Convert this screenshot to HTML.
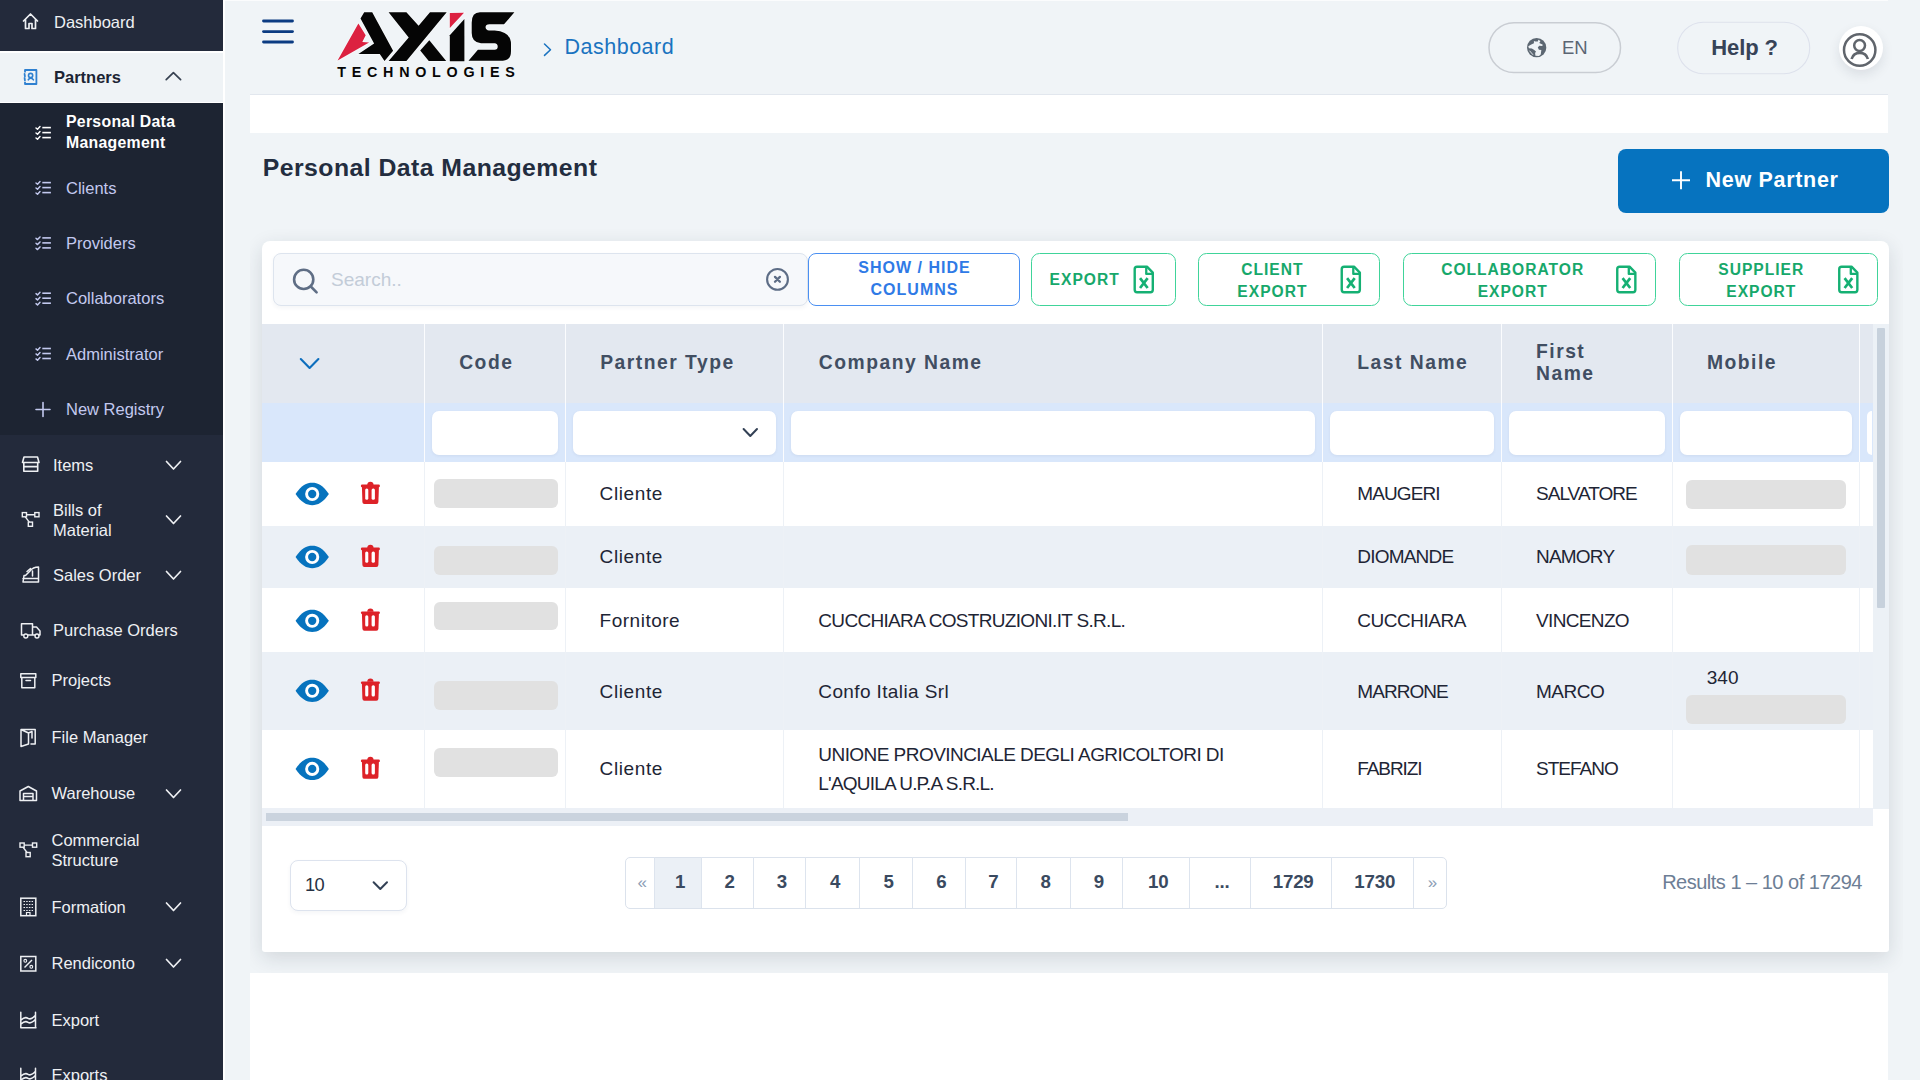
<!DOCTYPE html>
<html><head><meta charset="utf-8">
<style>
*{box-sizing:border-box;margin:0;padding:0}
html,body{width:1920px;height:1080px;overflow:hidden}
body{background:#f0f4f7;font-family:"Liberation Sans",sans-serif;position:relative;color:#1e2535}
.a{position:absolute}
svg{display:block;overflow:visible}
</style></head>
<body>
<div class="a" style="left:0px;top:0px;width:223px;height:1080px;background:#232a3b"></div>
<div class="a" style="left:0px;top:51px;width:223px;height:52px;background:#eff3f6;border-top:2px solid #fff;border-bottom:1.5px solid #fff"></div>
<div class="a" style="left:0px;top:103px;width:223px;height:331.5px;background:#1d2432"></div>
<div class="a" style="left:223px;top:0px;width:2.3000000000000114px;height:1080px;background:#ffffff"></div>
<div class="a" style="left:225px;top:0px;width:1663px;height:1px;background:#fbfcfd"></div>
<div class="a" style="left:54px;top:13.83px;font-size:16.5px;line-height:16.5px;color:#eef0f3;font-weight:normal;letter-spacing:0px;white-space:nowrap;">Dashboard</div>
<div class="a" style="left:54px;top:68.63px;font-size:16.5px;line-height:16.5px;color:#1c2434;font-weight:bold;letter-spacing:0px;white-space:nowrap;">Partners</div>
<div class="a" style="left:66px;top:114.03px;font-size:15.8px;line-height:15.8px;color:#ffffff;font-weight:bold;letter-spacing:0.3px;white-space:nowrap;">Personal Data</div>
<div class="a" style="left:66px;top:134.73px;font-size:15.8px;line-height:15.8px;color:#ffffff;font-weight:bold;letter-spacing:0.3px;white-space:nowrap;">Management</div>
<div class="a" style="left:66px;top:179.53px;font-size:16.5px;line-height:16.5px;color:#c3c9ef;font-weight:normal;letter-spacing:0px;white-space:nowrap;">Clients</div>
<div class="a" style="left:66px;top:235.03px;font-size:16.5px;line-height:16.5px;color:#c3c9ef;font-weight:normal;letter-spacing:0px;white-space:nowrap;">Providers</div>
<div class="a" style="left:66px;top:290.28px;font-size:16.5px;line-height:16.5px;color:#c3c9ef;font-weight:normal;letter-spacing:0px;white-space:nowrap;">Collaborators</div>
<div class="a" style="left:66px;top:345.53px;font-size:16.5px;line-height:16.5px;color:#c3c9ef;font-weight:normal;letter-spacing:0px;white-space:nowrap;">Administrator</div>
<div class="a" style="left:66px;top:401.03px;font-size:16.5px;line-height:16.5px;color:#c3c9ef;font-weight:normal;letter-spacing:0px;white-space:nowrap;">New Registry</div>
<div class="a" style="left:53px;top:456.53px;font-size:16.5px;line-height:16.5px;color:#eef0f3;font-weight:normal;letter-spacing:0px;white-space:nowrap;">Items</div>
<div class="a" style="left:53px;top:502.28px;font-size:16.5px;line-height:16.5px;color:#eef0f3;font-weight:normal;letter-spacing:0px;white-space:nowrap;">Bills of</div>
<div class="a" style="left:53px;top:521.78px;font-size:16.5px;line-height:16.5px;color:#eef0f3;font-weight:normal;letter-spacing:0px;white-space:nowrap;">Material</div>
<div class="a" style="left:53px;top:567.28px;font-size:16.5px;line-height:16.5px;color:#eef0f3;font-weight:normal;letter-spacing:0px;white-space:nowrap;">Sales Order</div>
<div class="a" style="left:53px;top:622.28px;font-size:16.5px;line-height:16.5px;color:#eef0f3;font-weight:normal;letter-spacing:0px;white-space:nowrap;">Purchase Orders</div>
<div class="a" style="left:51.5px;top:672.28px;font-size:16.5px;line-height:16.5px;color:#eef0f3;font-weight:normal;letter-spacing:0px;white-space:nowrap;">Projects</div>
<div class="a" style="left:51.5px;top:728.53px;font-size:16.5px;line-height:16.5px;color:#eef0f3;font-weight:normal;letter-spacing:0px;white-space:nowrap;">File Manager</div>
<div class="a" style="left:51.5px;top:785.28px;font-size:16.5px;line-height:16.5px;color:#eef0f3;font-weight:normal;letter-spacing:0px;white-space:nowrap;">Warehouse</div>
<div class="a" style="left:51.5px;top:831.78px;font-size:16.5px;line-height:16.5px;color:#eef0f3;font-weight:normal;letter-spacing:0px;white-space:nowrap;">Commercial</div>
<div class="a" style="left:51.5px;top:852.28px;font-size:16.5px;line-height:16.5px;color:#eef0f3;font-weight:normal;letter-spacing:0px;white-space:nowrap;">Structure</div>
<div class="a" style="left:51.5px;top:898.53px;font-size:16.5px;line-height:16.5px;color:#eef0f3;font-weight:normal;letter-spacing:0px;white-space:nowrap;">Formation</div>
<div class="a" style="left:51.5px;top:954.78px;font-size:16.5px;line-height:16.5px;color:#eef0f3;font-weight:normal;letter-spacing:0px;white-space:nowrap;">Rendiconto</div>
<div class="a" style="left:51.5px;top:1011.53px;font-size:16.5px;line-height:16.5px;color:#eef0f3;font-weight:normal;letter-spacing:0px;white-space:nowrap;">Export</div>
<div class="a" style="left:51.5px;top:1067.03px;font-size:16.5px;line-height:16.5px;color:#eef0f3;font-weight:normal;letter-spacing:0px;white-space:nowrap;">Exports</div>
<svg class="a" style="left:0px;top:0px" width="1920" height="1080" viewBox="0 0 1920 1080"><path d="M23.5 21 L30.5 14 L37.5 21 M25.5 19.5 V28.5 H29 V23.5 H32 V28.5 H35.5 V19.5" stroke="#eef0f3" stroke-width="1.7" fill="none" stroke-linecap="round" stroke-linejoin="round"/><path d="M25 72.4 V70 H36.4 V84 H25 V81.8" stroke="#2f80d0" stroke-width="1.8" fill="none" stroke-linejoin="round"/><path d="M24.6 74 L24.9 76.4 M24.6 77.9 L24.9 80.3" stroke="#2f80d0" stroke-width="1.8" stroke-linecap="round"/><circle cx="30.6" cy="75.5" r="2.1" stroke="#2f80d0" stroke-width="1.6" fill="none"/><path d="M28.3 79.8 Q30.6 76.4 33.4 79.8" stroke="#2f80d0" stroke-width="1.6" fill="none" stroke-linecap="round"/><path d="M166.2 79.6 L173.4 72.6 L180.6 79.6" stroke="#374151" stroke-width="1.7" fill="none" stroke-linecap="round" stroke-linejoin="round"/><path d="M166.5 461.5 L173.5 469.0 L180.5 461.5" stroke="#eef0f3" stroke-width="1.7" fill="none" stroke-linecap="round" stroke-linejoin="round"/><path d="M166.5 516 L173.5 523.5 L180.5 516" stroke="#eef0f3" stroke-width="1.7" fill="none" stroke-linecap="round" stroke-linejoin="round"/><path d="M166.5 571.5 L173.5 579.0 L180.5 571.5" stroke="#eef0f3" stroke-width="1.7" fill="none" stroke-linecap="round" stroke-linejoin="round"/><path d="M166.5 790 L173.5 797.5 L180.5 790" stroke="#eef0f3" stroke-width="1.7" fill="none" stroke-linecap="round" stroke-linejoin="round"/><path d="M166.5 903 L173.5 910.5 L180.5 903" stroke="#eef0f3" stroke-width="1.7" fill="none" stroke-linecap="round" stroke-linejoin="round"/><path d="M166.5 959.5 L173.5 967.0 L180.5 959.5" stroke="#eef0f3" stroke-width="1.7" fill="none" stroke-linecap="round" stroke-linejoin="round"/><path d="M36 128.0 L37.5 129.3 L40 126.60000000000001" stroke="#ffffff" stroke-width="1.45" fill="none" stroke-linecap="round" stroke-linejoin="round"/><path d="M42.3 127.60000000000001 H50.9" stroke="#ffffff" stroke-width="1.6" stroke-linecap="butt"/><path d="M36 133.0 L37.5 134.29999999999998 L40 131.6" stroke="#ffffff" stroke-width="1.45" fill="none" stroke-linecap="round" stroke-linejoin="round"/><path d="M42.3 132.6 H50.9" stroke="#ffffff" stroke-width="1.6" stroke-linecap="butt"/><path d="M36 138.0 L37.5 139.29999999999998 L40 136.6" stroke="#ffffff" stroke-width="1.45" fill="none" stroke-linecap="round" stroke-linejoin="round"/><path d="M42.3 137.6 H50.9" stroke="#ffffff" stroke-width="1.6" stroke-linecap="butt"/><path d="M36 183.0 L37.5 184.29999999999998 L40 181.6" stroke="#c3c9ef" stroke-width="1.45" fill="none" stroke-linecap="round" stroke-linejoin="round"/><path d="M42.3 182.6 H50.9" stroke="#c3c9ef" stroke-width="1.6" stroke-linecap="butt"/><path d="M36 188.0 L37.5 189.29999999999998 L40 186.6" stroke="#c3c9ef" stroke-width="1.45" fill="none" stroke-linecap="round" stroke-linejoin="round"/><path d="M42.3 187.6 H50.9" stroke="#c3c9ef" stroke-width="1.6" stroke-linecap="butt"/><path d="M36 193.0 L37.5 194.29999999999998 L40 191.6" stroke="#c3c9ef" stroke-width="1.45" fill="none" stroke-linecap="round" stroke-linejoin="round"/><path d="M42.3 192.6 H50.9" stroke="#c3c9ef" stroke-width="1.6" stroke-linecap="butt"/><path d="M36 238.3 L37.5 239.6 L40 236.9" stroke="#c3c9ef" stroke-width="1.45" fill="none" stroke-linecap="round" stroke-linejoin="round"/><path d="M42.3 237.9 H50.9" stroke="#c3c9ef" stroke-width="1.6" stroke-linecap="butt"/><path d="M36 243.3 L37.5 244.6 L40 241.9" stroke="#c3c9ef" stroke-width="1.45" fill="none" stroke-linecap="round" stroke-linejoin="round"/><path d="M42.3 242.9 H50.9" stroke="#c3c9ef" stroke-width="1.6" stroke-linecap="butt"/><path d="M36 248.3 L37.5 249.6 L40 246.9" stroke="#c3c9ef" stroke-width="1.45" fill="none" stroke-linecap="round" stroke-linejoin="round"/><path d="M42.3 247.9 H50.9" stroke="#c3c9ef" stroke-width="1.6" stroke-linecap="butt"/><path d="M36 293.6 L37.5 294.90000000000003 L40 292.2" stroke="#c3c9ef" stroke-width="1.45" fill="none" stroke-linecap="round" stroke-linejoin="round"/><path d="M42.3 293.2 H50.9" stroke="#c3c9ef" stroke-width="1.6" stroke-linecap="butt"/><path d="M36 298.6 L37.5 299.90000000000003 L40 297.2" stroke="#c3c9ef" stroke-width="1.45" fill="none" stroke-linecap="round" stroke-linejoin="round"/><path d="M42.3 298.2 H50.9" stroke="#c3c9ef" stroke-width="1.6" stroke-linecap="butt"/><path d="M36 303.6 L37.5 304.90000000000003 L40 302.2" stroke="#c3c9ef" stroke-width="1.45" fill="none" stroke-linecap="round" stroke-linejoin="round"/><path d="M42.3 303.2 H50.9" stroke="#c3c9ef" stroke-width="1.6" stroke-linecap="butt"/><path d="M36 348.90000000000003 L37.5 350.20000000000005 L40 347.5" stroke="#c3c9ef" stroke-width="1.45" fill="none" stroke-linecap="round" stroke-linejoin="round"/><path d="M42.3 348.5 H50.9" stroke="#c3c9ef" stroke-width="1.6" stroke-linecap="butt"/><path d="M36 353.90000000000003 L37.5 355.20000000000005 L40 352.5" stroke="#c3c9ef" stroke-width="1.45" fill="none" stroke-linecap="round" stroke-linejoin="round"/><path d="M42.3 353.5 H50.9" stroke="#c3c9ef" stroke-width="1.6" stroke-linecap="butt"/><path d="M36 358.90000000000003 L37.5 360.20000000000005 L40 357.5" stroke="#c3c9ef" stroke-width="1.45" fill="none" stroke-linecap="round" stroke-linejoin="round"/><path d="M42.3 358.5 H50.9" stroke="#c3c9ef" stroke-width="1.6" stroke-linecap="butt"/><path d="M36 409.5 H50 M43 402.5 V416.5" stroke="#c3c9ef" stroke-width="1.6" stroke-linecap="round"/><path d="M22.5 462.5 L24 457 H37.5 L39 462.5 Z M23.8 462.5 V471.2 H37.7 V462.5 M23.8 466.6 H37.7" stroke="#eef0f3" stroke-width="1.6" fill="none" stroke-linecap="round" stroke-linejoin="round"/><rect x="22.3" y="512.6" width="4.2" height="4.2" stroke="#eef0f3" stroke-width="1.4" fill="none"/><rect x="34.8" y="512.6" width="4.2" height="4.2" stroke="#eef0f3" stroke-width="1.4" fill="none"/><rect x="28.3" y="522.1" width="4.2" height="4.2" stroke="#eef0f3" stroke-width="1.4" fill="none"/><path d="M26.5 514.7 H34.8 M25.3 516.8000000000001 L29.3 522.1" stroke="#eef0f3" stroke-width="1.4" fill="none"/><rect x="20" y="843" width="4.2" height="4.2" stroke="#eef0f3" stroke-width="1.4" fill="none"/><rect x="32.5" y="843" width="4.2" height="4.2" stroke="#eef0f3" stroke-width="1.4" fill="none"/><rect x="26" y="852.5" width="4.2" height="4.2" stroke="#eef0f3" stroke-width="1.4" fill="none"/><path d="M24.2 845.1 H32.5 M23 847.2 L27 852.5" stroke="#eef0f3" stroke-width="1.4" fill="none"/><path d="M23 582 H38.5 V567 Q33 567 30 571 L25.5 575.5 L24 575.5 Z M23 578.5 H38.5 M27 571.5 L30.5 568.5 M32.5 571 V576" stroke="#eef0f3" stroke-width="1.5" fill="none" stroke-linecap="round" stroke-linejoin="round"/><path d="M21.5 635 V623.8 H32.5 V635 M32.5 627 H36.5 L40 631 V635 H38.5 M21.5 635 H23.5 M28 635 H35" stroke="#eef0f3" stroke-width="1.5" fill="none" stroke-linecap="round" stroke-linejoin="round"/><circle cx="25.8" cy="636" r="2" stroke="#eef0f3" stroke-width="1.4" fill="none"/><circle cx="37" cy="636" r="2" stroke="#eef0f3" stroke-width="1.4" fill="none"/><path d="M20.8 673.8 H35.8 V677.5 H20.8 Z M21.8 677.5 V687.8 H34.8 V677.5 M26 680.5 H30.5" stroke="#eef0f3" stroke-width="1.5" fill="none" stroke-linecap="round" stroke-linejoin="round"/><path d="M21 729.5 H35.2 V744 H31 M21 729.5 V746.5 L28.5 744 V733 L21 729.5 M28.5 733 L32 731.5 V738" stroke="#eef0f3" stroke-width="1.5" fill="none" stroke-linecap="round" stroke-linejoin="round"/><path d="M20 800.5 V791 L28.3 786.5 L36.5 791 V800.5 Z M23.5 800.5 V793.5 H33 V800.5 M23.5 796.5 H33" stroke="#eef0f3" stroke-width="1.5" fill="none" stroke-linecap="round" stroke-linejoin="round"/><rect x="20.8" y="898.2" width="15" height="17.5" stroke="#eef0f3" stroke-width="1.5" fill="none"/><path d="M23.5 901.5 H33" stroke="#eef0f3" stroke-width="1.1" stroke-dasharray="1.5 1.2"/><path d="M23.5 904.5 H33" stroke="#eef0f3" stroke-width="1.1" stroke-dasharray="1.5 1.2"/><path d="M23.5 907.5 H33" stroke="#eef0f3" stroke-width="1.1" stroke-dasharray="1.5 1.2"/><path d="M23.5 910.5 H33" stroke="#eef0f3" stroke-width="1.1" stroke-dasharray="1.5 1.2"/><path d="M26.5 915.5 V912.5 H30 V915.5" stroke="#eef0f3" stroke-width="1.2" fill="none"/><rect x="20.8" y="956.5" width="15" height="14.5" stroke="#eef0f3" stroke-width="1.5" fill="none"/><path d="M24.5 967.5 L32 960" stroke="#eef0f3" stroke-width="1.4"/><circle cx="25.3" cy="960.8" r="1.4" stroke="#eef0f3" stroke-width="1.1" fill="none"/><circle cx="31.3" cy="966.8" r="1.4" stroke="#eef0f3" stroke-width="1.1" fill="none"/><path d="M20.8 1012.3 V1027.8 H36 M20.8 1020.3 Q25 1016.3 28 1018.3 T35.5 1015.3 M20.8 1024.3 Q25 1020.3 28 1022.3 T35.5 1019.3 M35.5 1012.3 V1027.8" stroke="#eef0f3" stroke-width="1.5" fill="none" stroke-linecap="round" stroke-linejoin="round"/><path d="M20.8 1068.3 V1083.8 H36 M20.8 1076.3 Q25 1072.3 28 1074.3 T35.5 1071.3 M20.8 1080.3 Q25 1076.3 28 1078.3 T35.5 1075.3 M35.5 1068.3 V1083.8" stroke="#eef0f3" stroke-width="1.5" fill="none" stroke-linecap="round" stroke-linejoin="round"/></svg>
<svg class="a" style="left:0px;top:0px" width="1920" height="1080" viewBox="0 0 1920 1080"><path d="M263.5 21 H292.5" stroke="#0b3b82" stroke-width="2.8" stroke-linecap="round"/><path d="M263.5 31.6 H292.5" stroke="#0b3b82" stroke-width="2.8" stroke-linecap="round"/><path d="M263.5 42 H292.5" stroke="#0b3b82" stroke-width="2.8" stroke-linecap="round"/><polygon points="337.6,60.6 358.4,23.4 365.7,35.3 362.3,42.1 369.1,42.6" fill="#dc2140" stroke="#f6f9fb" stroke-width="1.7" paint-order="stroke"/><polygon points="360.5,18.4 364.2,12.2 372.2,12.2 393.1,50.7 384.5,61.1 379.8,54.1 358.4,54.1 374.1,43.4" fill="#050505" stroke="#f6f9fb" stroke-width="1.7" paint-order="stroke"/><polygon points="388.6,12.2 406.4,12.2 418.6,25.7 430,12.3 446.7,12.3 406.4,61.1 388.6,61.1 408.7,37.4" fill="#050505" stroke="#f6f9fb" stroke-width="1.7" paint-order="stroke"/><polygon points="429.3,40.3 446.2,61.1 428.75,61.1 420.2,50.4" fill="#050505" stroke="#f6f9fb" stroke-width="1.7" paint-order="stroke"/><polygon points="449.8,13 464,12.8 449.8,28" fill="#dc2140" stroke="#f6f9fb" stroke-width="1.7" paint-order="stroke"/><polygon points="449.8,35.2 464.4,19 464.4,61.2 449.8,61.2" fill="#050505" stroke="#f6f9fb" stroke-width="1.7" paint-order="stroke"/><path d="M480 12.3 H514.4 L504 24.3 H489.4 Q485.2 24.6 485.6 27.6 Q486 30.3 489 30.5 H494.6 Q511 31.5 511 44 V51 Q511 60.7 502.9 60.7 H468.5 L477.9 49.8 H494.6 Q497.7 49.6 497.7 46.7 Q497.7 43.6 494.6 43.3 H481 Q471.7 42.5 471.7 33 V22.7 Q471.7 12.3 480 12.3 Z" fill="#050505" stroke="#f6f9fb" stroke-width="1.7" paint-order="stroke"/><text x="337.3" y="76.9" font-family="Liberation Sans" font-weight="bold" font-size="14.3" fill="#050505" textLength="177.5" lengthAdjust="spacing">TECHNOLOGIES</text><path d="M544.5 44 L550.5 49.7 L544.5 55.4" stroke="#1a73c0" stroke-width="1.5" fill="none" stroke-linecap="round" stroke-linejoin="round"/><rect x="1489" y="22.8" width="131.5" height="49.8" rx="24.9" fill="none" stroke="#c9cdd3" stroke-width="1.5"/><rect x="1677.7" y="22.2" width="132" height="51.5" rx="25.7" fill="none" stroke="#dde1ec" stroke-width="1.1"/></svg>
<svg class="a" style="left:1520px;top:32px" width="36" height="32" viewBox="0 0 1215 1080"><circle cx="562" cy="528" r="326" fill="#5c6772"/><path d="M470,300 L520,320 L600,320 L620,260 L690,300 L650,370 L770,430 L750,470 L650,460 L600,520 L640,600 L720,610 L700,760 L640,810 L520,800 L510,710 L540,660 L480,610 L400,560 L300,550 L280,480 L380,420 L470,380 Z" fill="#eff3f6"/><path d="M320,630 L440,770" stroke="#eff3f6" stroke-width="30"/></svg>
<div class="a" style="left:564.5px;top:37.30px;font-size:21.5px;line-height:21.5px;color:#1a73c0;font-weight:normal;letter-spacing:0.5px;white-space:nowrap;">Dashboard</div>
<div class="a" style="left:1562px;top:39.14px;font-size:18.5px;line-height:18.5px;color:#5b6573;font-weight:normal;letter-spacing:0px;white-space:nowrap;">EN</div>
<div class="a" style="left:1711.3px;top:37.08px;font-size:22px;line-height:22px;color:#374357;font-weight:bold;letter-spacing:-0.1px;white-space:nowrap;">Help ?</div>
<div class="a" style="left:1839px;top:25.6px;width:44.4px;height:44.4px;border-radius:50%;background:#fff;box-shadow:0 5px 12px rgba(30,40,60,0.10)"></div>
<svg class="a" style="left:0px;top:0px" width="1920" height="1080" viewBox="0 0 1920 1080"><circle cx="1859.7" cy="50" r="15.7" stroke="#60656c" stroke-width="2.5" fill="none"/><circle cx="1859.6" cy="45.5" r="5.4" stroke="#60656c" stroke-width="2.5" fill="none"/><path d="M1851.6 59 A8.5 8.5 0 0 1 1867.9 59" stroke="#60656c" stroke-width="2.6" fill="none"/></svg>
<div class="a" style="left:250px;top:94px;width:1638px;height:39px;background:#fff;border-top:1px solid #e2e7ee"></div>
<div class="a" style="left:262.75px;top:155.61px;font-size:24.8px;line-height:24.8px;color:#232d3f;font-weight:bold;letter-spacing:0.45px;white-space:nowrap;">Personal Data Management</div>
<div class="a" style="left:1618px;top:149px;width:271px;height:64px;background:#0673bf;border-radius:8px"></div>
<svg class="a" style="left:0px;top:0px" width="1920" height="1080" viewBox="0 0 1920 1080"><path d="M1672 180.2 H1690 M1681 171.2 V189.2" stroke="#fff" stroke-width="1.9"/></svg>
<div class="a" style="left:1705.5px;top:170.20px;font-size:21.5px;line-height:21.5px;color:#ffffff;font-weight:bold;letter-spacing:0.7px;white-space:nowrap;">New Partner</div>
<div class="a" style="left:250px;top:133px;width:1653px;height:840px;overflow:hidden"><div class="a" style="left:12px;top:108px;width:1627px;height:711px;background:#fff;border-radius:8px 8px 3px 3px;box-shadow:0 6px 20px rgba(30,40,60,0.14)"></div></div>
<div class="a" style="left:250px;top:973px;width:1638px;height:107px;background:#fff"></div>
<div class="a" style="left:273px;top:253px;width:534.5px;height:53px;background:#f6f8fb;border:1px solid #dde4ee;border-radius:8px;box-shadow:0 2px 4px rgba(40,60,90,0.05)"></div>
<svg class="a" style="left:0px;top:0px" width="1920" height="1080" viewBox="0 0 1920 1080"><circle cx="303.7" cy="279.4" r="9.6" stroke="#5f6e85" stroke-width="2.6" fill="none"/><path d="M310.8 286.5 L316.6 292.3" stroke="#5f6e85" stroke-width="2.6" stroke-linecap="round"/><circle cx="777.5" cy="279.4" r="10.4" stroke="#5d6d86" stroke-width="2.1" fill="none"/><path d="M775 276.9 L779.9 281.8 M779.9 276.9 L775 281.8" stroke="#5d6d86" stroke-width="2.3" stroke-linecap="round"/></svg>
<div class="a" style="left:331px;top:269.62px;font-size:19px;line-height:19px;color:#c3ccd8;font-weight:normal;letter-spacing:0px;white-space:nowrap;">Search..</div>
<div class="a" style="left:808.3px;top:253.2px;width:211.5px;height:52.5px;border:1.6px solid #4b90f2;border-radius:8px;background:#fff"></div>
<div class="a" style="left:614px;width:600px;text-align:center;top:260.36px;font-size:16px;line-height:16px;color:#2f7ae6;font-weight:bold;letter-spacing:1.0px;text-indent:1.0px;white-space:nowrap;">SHOW / HIDE</div>
<div class="a" style="left:614px;width:600px;text-align:center;top:282.26px;font-size:16px;line-height:16px;color:#2f7ae6;font-weight:bold;letter-spacing:1.0px;text-indent:1.0px;white-space:nowrap;">COLUMNS</div>
<div class="a" style="left:1031.3px;top:253.2px;width:144.5px;height:52.5px;border:1.6px solid #40d49a;border-radius:8.5px;background:#fff"></div>
<div class="a" style="left:1198.4px;top:253.2px;width:181.89999999999986px;height:52.5px;border:1.6px solid #40d49a;border-radius:8.5px;background:#fff"></div>
<div class="a" style="left:1403.3px;top:253.2px;width:252.4000000000001px;height:52.5px;border:1.6px solid #40d49a;border-radius:8.5px;background:#fff"></div>
<div class="a" style="left:1678.7px;top:253.2px;width:199.39999999999986px;height:52.5px;border:1.6px solid #40d49a;border-radius:8.5px;background:#fff"></div>
<svg class="a" style="left:0px;top:0px" width="1920" height="1080" viewBox="0 0 1920 1080"><path d="M1137.05 266.7 H1146.95 L1152.8 272.6 V289.8 Q1152.8 292.2 1150.45 292.2 H1137.05 Q1134.7 292.2 1134.7 289.8 V269.1 Q1134.7 266.7 1137.05 266.7 Z" stroke="#15b073" stroke-width="2.4" fill="none" stroke-linejoin="round"/><path d="M1146.25 266.8 V273.90000000000003 H1152.65" stroke="#15b073" stroke-width="2.3" fill="none" stroke-linejoin="round"/><path d="M1140.05 278.2 L1147.65 288.0 M1147.65 278.2 L1140.05 288.0" stroke="#15b073" stroke-width="2.7" fill="none"/><path d="M1344.1 266.7 H1354.0 L1359.85 272.6 V289.8 Q1359.85 292.2 1357.5 292.2 H1344.1 Q1341.75 292.2 1341.75 289.8 V269.1 Q1341.75 266.7 1344.1 266.7 Z" stroke="#15b073" stroke-width="2.4" fill="none" stroke-linejoin="round"/><path d="M1353.3 266.8 V273.90000000000003 H1359.7" stroke="#15b073" stroke-width="2.3" fill="none" stroke-linejoin="round"/><path d="M1347.1 278.2 L1354.7 288.0 M1354.7 278.2 L1347.1 288.0" stroke="#15b073" stroke-width="2.7" fill="none"/><path d="M1619.6 266.7 H1629.5 L1635.35 272.6 V289.8 Q1635.35 292.2 1633.0 292.2 H1619.6 Q1617.25 292.2 1617.25 289.8 V269.1 Q1617.25 266.7 1619.6 266.7 Z" stroke="#15b073" stroke-width="2.4" fill="none" stroke-linejoin="round"/><path d="M1628.8 266.8 V273.90000000000003 H1635.2" stroke="#15b073" stroke-width="2.3" fill="none" stroke-linejoin="round"/><path d="M1622.6 278.2 L1630.2 288.0 M1630.2 278.2 L1622.6 288.0" stroke="#15b073" stroke-width="2.7" fill="none"/><path d="M1841.6 266.7 H1851.5 L1857.35 272.6 V289.8 Q1857.35 292.2 1855.0 292.2 H1841.6 Q1839.25 292.2 1839.25 289.8 V269.1 Q1839.25 266.7 1841.6 266.7 Z" stroke="#15b073" stroke-width="2.4" fill="none" stroke-linejoin="round"/><path d="M1850.8 266.8 V273.90000000000003 H1857.2" stroke="#15b073" stroke-width="2.3" fill="none" stroke-linejoin="round"/><path d="M1844.6 278.2 L1852.2 288.0 M1852.2 278.2 L1844.6 288.0" stroke="#15b073" stroke-width="2.7" fill="none"/></svg>
<div class="a" style="left:1049.6px;top:271.79px;font-size:15.6px;line-height:15.6px;color:#17a86b;font-weight:bold;letter-spacing:1.0px;white-space:nowrap;">EXPORT</div>
<div class="a" style="left:971.9000000000001px;width:600px;text-align:center;top:261.59px;font-size:15.6px;line-height:15.6px;color:#17a86b;font-weight:bold;letter-spacing:1.0px;text-indent:1.0px;white-space:nowrap;">CLIENT</div>
<div class="a" style="left:971.9000000000001px;width:600px;text-align:center;top:283.69px;font-size:15.6px;line-height:15.6px;color:#17a86b;font-weight:bold;letter-spacing:1.0px;text-indent:1.0px;white-space:nowrap;">EXPORT</div>
<div class="a" style="left:1212.2px;width:600px;text-align:center;top:261.59px;font-size:15.6px;line-height:15.6px;color:#17a86b;font-weight:bold;letter-spacing:1.0px;text-indent:1.0px;white-space:nowrap;">COLLABORATOR</div>
<div class="a" style="left:1212.2px;width:600px;text-align:center;top:283.69px;font-size:15.6px;line-height:15.6px;color:#17a86b;font-weight:bold;letter-spacing:1.0px;text-indent:1.0px;white-space:nowrap;">EXPORT</div>
<div class="a" style="left:1460.8px;width:600px;text-align:center;top:261.59px;font-size:15.6px;line-height:15.6px;color:#17a86b;font-weight:bold;letter-spacing:1.0px;text-indent:1.0px;white-space:nowrap;">SUPPLIER</div>
<div class="a" style="left:1460.8px;width:600px;text-align:center;top:283.69px;font-size:15.6px;line-height:15.6px;color:#17a86b;font-weight:bold;letter-spacing:1.0px;text-indent:1.0px;white-space:nowrap;">EXPORT</div>
<div class="a" style="left:262px;top:324px;width:1610.5px;height:79.30000000000001px;background:#e3e8f0"></div>
<div class="a" style="left:262px;top:403.3px;width:1610.5px;height:58.69999999999999px;background:#d9e7fb"></div>
<div class="a" style="left:262px;top:462px;width:1610.5px;height:64px;background:#fff"></div>
<div class="a" style="left:262px;top:526px;width:1610.5px;height:62.39999999999998px;background:#ebf0f6"></div>
<div class="a" style="left:262px;top:588.4px;width:1610.5px;height:63.60000000000002px;background:#fff"></div>
<div class="a" style="left:262px;top:652px;width:1610.5px;height:78px;background:#ebf0f6"></div>
<div class="a" style="left:262px;top:730px;width:1610.5px;height:78.39999999999998px;background:#fff"></div>
<div class="a" style="left:423.9px;top:324px;width:1.0px;height:138px;background:#fbfcfe"></div>
<div class="a" style="left:423.9px;top:462px;width:1.0px;height:346.4px;background:#edf1f6"></div>
<div class="a" style="left:565.0px;top:324px;width:1.0px;height:138px;background:#fbfcfe"></div>
<div class="a" style="left:565.0px;top:462px;width:1.0px;height:346.4px;background:#edf1f6"></div>
<div class="a" style="left:782.9px;top:324px;width:1.0px;height:138px;background:#fbfcfe"></div>
<div class="a" style="left:782.9px;top:462px;width:1.0px;height:346.4px;background:#edf1f6"></div>
<div class="a" style="left:1322.0px;top:324px;width:1.0px;height:138px;background:#fbfcfe"></div>
<div class="a" style="left:1322.0px;top:462px;width:1.0px;height:346.4px;background:#edf1f6"></div>
<div class="a" style="left:1501.0px;top:324px;width:1.0px;height:138px;background:#fbfcfe"></div>
<div class="a" style="left:1501.0px;top:462px;width:1.0px;height:346.4px;background:#edf1f6"></div>
<div class="a" style="left:1671.8px;top:324px;width:1.0px;height:138px;background:#fbfcfe"></div>
<div class="a" style="left:1671.8px;top:462px;width:1.0px;height:346.4px;background:#edf1f6"></div>
<div class="a" style="left:1858.7px;top:324px;width:1.0px;height:138px;background:#fbfcfe"></div>
<div class="a" style="left:1858.7px;top:462px;width:1.0px;height:346.4px;background:#edf1f6"></div>
<div class="a" style="left:432px;top:410.5px;width:125.60000000000002px;height:44.5px;background:#fff;border-radius:7px;box-shadow:0 1px 3px rgba(60,80,120,0.08)"></div>
<div class="a" style="left:572.5px;top:410.5px;width:203.89999999999998px;height:44.5px;background:#fff;border-radius:7px;box-shadow:0 1px 3px rgba(60,80,120,0.08)"></div>
<div class="a" style="left:791px;top:410.5px;width:524px;height:44.5px;background:#fff;border-radius:7px;box-shadow:0 1px 3px rgba(60,80,120,0.08)"></div>
<div class="a" style="left:1330.2px;top:410.5px;width:163.5999999999999px;height:44.5px;background:#fff;border-radius:7px;box-shadow:0 1px 3px rgba(60,80,120,0.08)"></div>
<div class="a" style="left:1509px;top:410.5px;width:156px;height:44.5px;background:#fff;border-radius:7px;box-shadow:0 1px 3px rgba(60,80,120,0.08)"></div>
<div class="a" style="left:1680px;top:410.5px;width:171.79999999999995px;height:44.5px;background:#fff;border-radius:7px;box-shadow:0 1px 3px rgba(60,80,120,0.08)"></div>
<div class="a" style="left:1866.8px;top:410.5px;width:5.7000000000000455px;height:44.5px;background:#fff;border-radius:7px 0 0 7px"></div>
<div class="a" style="left:1872.5px;top:324px;width:16.5px;height:485px;background:#ecf1f6"></div>
<div class="a" style="left:1877px;top:328px;width:8.200000000000045px;height:280px;background:#c7d1dc;border-radius:1px"></div>
<svg class="a" style="left:0px;top:0px" width="1920" height="1080" viewBox="0 0 1920 1080"><path d="M300.8 359 L309.6 368 L318.4 359" stroke="#0d6ebd" stroke-width="2.1" fill="none" stroke-linecap="round" stroke-linejoin="round"/><path d="M743.6 429 L750.3 436 L757 429" stroke="#334155" stroke-width="2" fill="none" stroke-linecap="round" stroke-linejoin="round"/></svg>
<div class="a" style="left:459.2px;top:353.26px;font-size:19.3px;line-height:19.3px;color:#414e62;font-weight:bold;letter-spacing:1.5px;white-space:nowrap;">Code</div>
<div class="a" style="left:600.2px;top:353.26px;font-size:19.3px;line-height:19.3px;color:#414e62;font-weight:bold;letter-spacing:1.5px;white-space:nowrap;">Partner Type</div>
<div class="a" style="left:818.8px;top:353.46px;font-size:19.3px;line-height:19.3px;color:#414e62;font-weight:bold;letter-spacing:1.5px;white-space:nowrap;">Company Name</div>
<div class="a" style="left:1357.3px;top:353.26px;font-size:19.3px;line-height:19.3px;color:#414e62;font-weight:bold;letter-spacing:1.5px;white-space:nowrap;">Last Name</div>
<div class="a" style="left:1536px;top:341.66px;font-size:19.3px;line-height:19.3px;color:#414e62;font-weight:bold;letter-spacing:1.5px;white-space:nowrap;">First</div>
<div class="a" style="left:1536px;top:364.26px;font-size:19.3px;line-height:19.3px;color:#414e62;font-weight:bold;letter-spacing:1.5px;white-space:nowrap;">Name</div>
<div class="a" style="left:1707px;top:353.16px;font-size:19.3px;line-height:19.3px;color:#414e62;font-weight:bold;letter-spacing:1.5px;white-space:nowrap;">Mobile</div>
<svg class="a" style="left:0px;top:0px" width="1920" height="1080" viewBox="0 0 1920 1080"><path d="M295.55 494 C301.55 485.35 306.55 482.85 312.2 482.85 C317.84999999999997 482.85 322.84999999999997 485.35 328.84999999999997 494 C322.84999999999997 502.65 317.84999999999997 505.15 312.2 505.15 C306.55 505.15 301.55 502.65 295.55 494 Z" fill="#0673be"/><circle cx="312.2" cy="494" r="7.05" fill="#fff"/><circle cx="312.2" cy="494" r="4.15" fill="#0673be"/><path d="M367.2 485.0 Q367.4 481.8 370.4 481.8 Q373.4 481.8 373.59999999999997 485.0 Z" fill="#dd2228"/><rect x="360.9" y="484.6" width="19" height="2.6" rx="1.2" fill="#dd2228"/><path d="M361.9 486.8 H378.9 L378.4 502.0 Q378.29999999999995 503.90000000000003 376.4 503.90000000000003 H364.4 Q362.5 503.90000000000003 362.4 502.0 Z" fill="#dd2228"/><rect x="365.2" y="488.5" width="3.1" height="11.2" rx="1.5" fill="#fff"/><rect x="371.59999999999997" y="488.5" width="3.3" height="11.2" rx="1.5" fill="#fff"/><path d="M295.55 557 C301.55 548.35 306.55 545.85 312.2 545.85 C317.84999999999997 545.85 322.84999999999997 548.35 328.84999999999997 557 C322.84999999999997 565.65 317.84999999999997 568.15 312.2 568.15 C306.55 568.15 301.55 565.65 295.55 557 Z" fill="#0673be"/><circle cx="312.2" cy="557" r="7.05" fill="#fff"/><circle cx="312.2" cy="557" r="4.15" fill="#0673be"/><path d="M367.2 548.0000000000001 Q367.4 544.8000000000001 370.4 544.8000000000001 Q373.4 544.8000000000001 373.59999999999997 548.0000000000001 Z" fill="#dd2228"/><rect x="360.9" y="547.6" width="19" height="2.6" rx="1.2" fill="#dd2228"/><path d="M361.9 549.8000000000001 H378.9 L378.4 565.0000000000001 Q378.29999999999995 566.9000000000001 376.4 566.9000000000001 H364.4 Q362.5 566.9000000000001 362.4 565.0000000000001 Z" fill="#dd2228"/><rect x="365.2" y="551.5000000000001" width="3.1" height="11.2" rx="1.5" fill="#fff"/><rect x="371.59999999999997" y="551.5000000000001" width="3.3" height="11.2" rx="1.5" fill="#fff"/><path d="M295.55 620.8 C301.55 612.15 306.55 609.65 312.2 609.65 C317.84999999999997 609.65 322.84999999999997 612.15 328.84999999999997 620.8 C322.84999999999997 629.4499999999999 317.84999999999997 631.9499999999999 312.2 631.9499999999999 C306.55 631.9499999999999 301.55 629.4499999999999 295.55 620.8 Z" fill="#0673be"/><circle cx="312.2" cy="620.8" r="7.05" fill="#fff"/><circle cx="312.2" cy="620.8" r="4.15" fill="#0673be"/><path d="M367.2 611.8000000000001 Q367.4 608.6 370.4 608.6 Q373.4 608.6 373.59999999999997 611.8000000000001 Z" fill="#dd2228"/><rect x="360.9" y="611.4" width="19" height="2.6" rx="1.2" fill="#dd2228"/><path d="M361.9 613.6 H378.9 L378.4 628.8000000000001 Q378.29999999999995 630.7 376.4 630.7 H364.4 Q362.5 630.7 362.4 628.8000000000001 Z" fill="#dd2228"/><rect x="365.2" y="615.3000000000001" width="3.1" height="11.2" rx="1.5" fill="#fff"/><rect x="371.59999999999997" y="615.3000000000001" width="3.3" height="11.2" rx="1.5" fill="#fff"/><path d="M295.55 690.8 C301.55 682.15 306.55 679.65 312.2 679.65 C317.84999999999997 679.65 322.84999999999997 682.15 328.84999999999997 690.8 C322.84999999999997 699.4499999999999 317.84999999999997 701.9499999999999 312.2 701.9499999999999 C306.55 701.9499999999999 301.55 699.4499999999999 295.55 690.8 Z" fill="#0673be"/><circle cx="312.2" cy="690.8" r="7.05" fill="#fff"/><circle cx="312.2" cy="690.8" r="4.15" fill="#0673be"/><path d="M367.2 681.8000000000001 Q367.4 678.6 370.4 678.6 Q373.4 678.6 373.59999999999997 681.8000000000001 Z" fill="#dd2228"/><rect x="360.9" y="681.4" width="19" height="2.6" rx="1.2" fill="#dd2228"/><path d="M361.9 683.6 H378.9 L378.4 698.8000000000001 Q378.29999999999995 700.7 376.4 700.7 H364.4 Q362.5 700.7 362.4 698.8000000000001 Z" fill="#dd2228"/><rect x="365.2" y="685.3000000000001" width="3.1" height="11.2" rx="1.5" fill="#fff"/><rect x="371.59999999999997" y="685.3000000000001" width="3.3" height="11.2" rx="1.5" fill="#fff"/><path d="M295.55 768.9 C301.55 760.25 306.55 757.75 312.2 757.75 C317.84999999999997 757.75 322.84999999999997 760.25 328.84999999999997 768.9 C322.84999999999997 777.55 317.84999999999997 780.05 312.2 780.05 C306.55 780.05 301.55 777.55 295.55 768.9 Z" fill="#0673be"/><circle cx="312.2" cy="768.9" r="7.05" fill="#fff"/><circle cx="312.2" cy="768.9" r="4.15" fill="#0673be"/><path d="M367.2 759.9000000000001 Q367.4 756.7 370.4 756.7 Q373.4 756.7 373.59999999999997 759.9000000000001 Z" fill="#dd2228"/><rect x="360.9" y="759.5" width="19" height="2.6" rx="1.2" fill="#dd2228"/><path d="M361.9 761.7 H378.9 L378.4 776.9000000000001 Q378.29999999999995 778.8000000000001 376.4 778.8000000000001 H364.4 Q362.5 778.8000000000001 362.4 776.9000000000001 Z" fill="#dd2228"/><rect x="365.2" y="763.4000000000001" width="3.1" height="11.2" rx="1.5" fill="#fff"/><rect x="371.59999999999997" y="763.4000000000001" width="3.3" height="11.2" rx="1.5" fill="#fff"/></svg>
<div class="a" style="left:434.3px;top:479.2px;width:123.40000000000003px;height:28.600000000000023px;background:#e1e1e1;border-radius:6px"></div>
<div class="a" style="left:434.3px;top:546.2px;width:123.40000000000003px;height:28.600000000000023px;background:#e1e1e1;border-radius:6px"></div>
<div class="a" style="left:434.3px;top:601.9px;width:123.40000000000003px;height:28.600000000000023px;background:#e1e1e1;border-radius:6px"></div>
<div class="a" style="left:434.3px;top:681.2px;width:123.40000000000003px;height:28.600000000000023px;background:#e1e1e1;border-radius:6px"></div>
<div class="a" style="left:434.3px;top:748.2px;width:123.40000000000003px;height:28.600000000000023px;background:#e1e1e1;border-radius:6px"></div>
<div class="a" style="left:1686px;top:479.8px;width:159.70000000000005px;height:29.600000000000023px;background:#e1e1e1;border-radius:6px"></div>
<div class="a" style="left:1686px;top:545.2px;width:159.70000000000005px;height:29.600000000000023px;background:#e1e1e1;border-radius:6px"></div>
<div class="a" style="left:1686px;top:694.8px;width:159.70000000000005px;height:29.600000000000023px;background:#e1e1e1;border-radius:6px"></div>
<div class="a" style="left:599.6px;top:484.32px;font-size:19px;line-height:19px;color:#1e2535;font-weight:normal;letter-spacing:0.6px;white-space:nowrap;">Cliente</div>
<div class="a" style="left:1357.3px;top:484.32px;font-size:19px;line-height:19px;color:#1e2535;font-weight:normal;letter-spacing:-0.89px;white-space:nowrap;">MAUGERI</div>
<div class="a" style="left:1536px;top:484.32px;font-size:19px;line-height:19px;color:#1e2535;font-weight:normal;letter-spacing:-0.97px;white-space:nowrap;">SALVATORE</div>
<div class="a" style="left:599.6px;top:547.42px;font-size:19px;line-height:19px;color:#1e2535;font-weight:normal;letter-spacing:0.6px;white-space:nowrap;">Cliente</div>
<div class="a" style="left:1357.3px;top:547.42px;font-size:19px;line-height:19px;color:#1e2535;font-weight:normal;letter-spacing:-0.8px;white-space:nowrap;">DIOMANDE</div>
<div class="a" style="left:1536px;top:547.42px;font-size:19px;line-height:19px;color:#1e2535;font-weight:normal;letter-spacing:-0.8px;white-space:nowrap;">NAMORY</div>
<div class="a" style="left:599.6px;top:611.42px;font-size:19px;line-height:19px;color:#1e2535;font-weight:normal;letter-spacing:0.5px;white-space:nowrap;">Fornitore</div>
<div class="a" style="left:818.3px;top:611.42px;font-size:19px;line-height:19px;color:#1e2535;font-weight:normal;letter-spacing:-0.68px;white-space:nowrap;">CUCCHIARA COSTRUZIONI.IT S.R.L.</div>
<div class="a" style="left:1357.3px;top:611.42px;font-size:19px;line-height:19px;color:#1e2535;font-weight:normal;letter-spacing:-0.47px;white-space:nowrap;">CUCCHIARA</div>
<div class="a" style="left:1536px;top:611.42px;font-size:19px;line-height:19px;color:#1e2535;font-weight:normal;letter-spacing:-0.65px;white-space:nowrap;">VINCENZO</div>
<div class="a" style="left:599.6px;top:681.92px;font-size:19px;line-height:19px;color:#1e2535;font-weight:normal;letter-spacing:0.6px;white-space:nowrap;">Cliente</div>
<div class="a" style="left:818.3px;top:681.92px;font-size:19px;line-height:19px;color:#1e2535;font-weight:normal;letter-spacing:0.38px;white-space:nowrap;">Confo Italia Srl</div>
<div class="a" style="left:1357.3px;top:681.92px;font-size:19px;line-height:19px;color:#1e2535;font-weight:normal;letter-spacing:-0.96px;white-space:nowrap;">MARRONE</div>
<div class="a" style="left:1536px;top:681.92px;font-size:19px;line-height:19px;color:#1e2535;font-weight:normal;letter-spacing:-0.49px;white-space:nowrap;">MARCO</div>
<div class="a" style="left:599.6px;top:759.22px;font-size:19px;line-height:19px;color:#1e2535;font-weight:normal;letter-spacing:0.6px;white-space:nowrap;">Cliente</div>
<div class="a" style="left:1357.3px;top:759.22px;font-size:19px;line-height:19px;color:#1e2535;font-weight:normal;letter-spacing:-1.1px;white-space:nowrap;">FABRIZI</div>
<div class="a" style="left:1536px;top:759.22px;font-size:19px;line-height:19px;color:#1e2535;font-weight:normal;letter-spacing:-1.0px;white-space:nowrap;">STEFANO</div>
<div class="a" style="left:818.3px;top:745.32px;font-size:19px;line-height:19px;color:#1e2535;font-weight:normal;letter-spacing:-0.55px;white-space:nowrap;">UNIONE PROVINCIALE DEGLI AGRICOLTORI DI</div>
<div class="a" style="left:818.3px;top:773.52px;font-size:19px;line-height:19px;color:#1e2535;font-weight:normal;letter-spacing:-0.8px;white-space:nowrap;">L'AQUILA U.P.A S.R.L.</div>
<div class="a" style="left:1706.8px;top:667.92px;font-size:19px;line-height:19px;color:#1e2535;font-weight:normal;letter-spacing:0px;white-space:nowrap;">340</div>
<div class="a" style="left:262px;top:808.4px;width:1610.5px;height:17.399999999999977px;background:#ecf0f6"></div>
<div class="a" style="left:266px;top:812.9px;width:862px;height:8.600000000000023px;background:#cad3de"></div>
<div class="a" style="left:290.4px;top:859.6px;width:116.60000000000002px;height:51.799999999999955px;border:1.5px solid #dde3ee;border-radius:8px;background:#fff;box-shadow:0 2px 4px rgba(40,60,90,0.05)"></div>
<div class="a" style="left:305px;top:876.11px;font-size:18.3px;line-height:18.3px;color:#263143;font-weight:normal;letter-spacing:-0.6px;white-space:nowrap;">10</div>
<svg class="a" style="left:0px;top:0px" width="1920" height="1080" viewBox="0 0 1920 1080"><path d="M373.6 882.2 L380.3 889 L387 882.2" stroke="#334155" stroke-width="2" fill="none" stroke-linecap="round" stroke-linejoin="round"/></svg>
<div class="a" style="left:625.3px;top:856.7px;width:821.7px;height:52.0px;border:1px solid #dbe2ec;border-radius:5px;background:#fff"></div>
<div class="a" style="left:654.2px;top:857.7px;width:47.09999999999991px;height:50.0px;background:#ebf0f6"></div>
<div class="a" style="left:653.7px;top:857.2px;width:1.0px;height:51.0px;background:#dde4ee"></div>
<div class="a" style="left:700.8px;top:857.2px;width:1.0px;height:51.0px;background:#dde4ee"></div>
<div class="a" style="left:752.8px;top:857.2px;width:1.0px;height:51.0px;background:#dde4ee"></div>
<div class="a" style="left:805.3px;top:857.2px;width:1.0px;height:51.0px;background:#dde4ee"></div>
<div class="a" style="left:859.2px;top:857.2px;width:1.0px;height:51.0px;background:#dde4ee"></div>
<div class="a" style="left:912.0px;top:857.2px;width:1.0px;height:51.0px;background:#dde4ee"></div>
<div class="a" style="left:965.0px;top:857.2px;width:1.0px;height:51.0px;background:#dde4ee"></div>
<div class="a" style="left:1016.1px;top:857.2px;width:1.0px;height:51.0px;background:#dde4ee"></div>
<div class="a" style="left:1069.5px;top:857.2px;width:1.0px;height:51.0px;background:#dde4ee"></div>
<div class="a" style="left:1122.2px;top:857.2px;width:1.0px;height:51.0px;background:#dde4ee"></div>
<div class="a" style="left:1188.5px;top:857.2px;width:1.0px;height:51.0px;background:#dde4ee"></div>
<div class="a" style="left:1249.5px;top:857.2px;width:1.0px;height:51.0px;background:#dde4ee"></div>
<div class="a" style="left:1331.0px;top:857.2px;width:1.0px;height:51.0px;background:#dde4ee"></div>
<div class="a" style="left:1412.7px;top:857.2px;width:1.0px;height:51.0px;background:#dde4ee"></div>
<div class="a" style="left:342.25px;width:600px;text-align:center;top:874.11px;font-size:17px;line-height:17px;color:#8b9db5;font-weight:normal;letter-spacing:0px;text-indent:0px;white-space:nowrap;">&laquo;</div>
<div class="a" style="left:380.25px;width:600px;text-align:center;top:873.37px;font-size:18.7px;line-height:18.7px;color:#3a4a60;font-weight:bold;letter-spacing:-0.2px;text-indent:-0.2px;white-space:nowrap;">1</div>
<div class="a" style="left:429.79999999999995px;width:600px;text-align:center;top:873.37px;font-size:18.7px;line-height:18.7px;color:#3a4a60;font-weight:bold;letter-spacing:-0.2px;text-indent:-0.2px;white-space:nowrap;">2</div>
<div class="a" style="left:482.04999999999995px;width:600px;text-align:center;top:873.37px;font-size:18.7px;line-height:18.7px;color:#3a4a60;font-weight:bold;letter-spacing:-0.2px;text-indent:-0.2px;white-space:nowrap;">3</div>
<div class="a" style="left:535.25px;width:600px;text-align:center;top:873.37px;font-size:18.7px;line-height:18.7px;color:#3a4a60;font-weight:bold;letter-spacing:-0.2px;text-indent:-0.2px;white-space:nowrap;">4</div>
<div class="a" style="left:588.6px;width:600px;text-align:center;top:873.37px;font-size:18.7px;line-height:18.7px;color:#3a4a60;font-weight:bold;letter-spacing:-0.2px;text-indent:-0.2px;white-space:nowrap;">5</div>
<div class="a" style="left:641.5px;width:600px;text-align:center;top:873.37px;font-size:18.7px;line-height:18.7px;color:#3a4a60;font-weight:bold;letter-spacing:-0.2px;text-indent:-0.2px;white-space:nowrap;">6</div>
<div class="a" style="left:693.55px;width:600px;text-align:center;top:873.37px;font-size:18.7px;line-height:18.7px;color:#3a4a60;font-weight:bold;letter-spacing:-0.2px;text-indent:-0.2px;white-space:nowrap;">7</div>
<div class="a" style="left:745.8px;width:600px;text-align:center;top:873.37px;font-size:18.7px;line-height:18.7px;color:#3a4a60;font-weight:bold;letter-spacing:-0.2px;text-indent:-0.2px;white-space:nowrap;">8</div>
<div class="a" style="left:798.8499999999999px;width:600px;text-align:center;top:873.37px;font-size:18.7px;line-height:18.7px;color:#3a4a60;font-weight:bold;letter-spacing:-0.2px;text-indent:-0.2px;white-space:nowrap;">9</div>
<div class="a" style="left:858.3499999999999px;width:600px;text-align:center;top:873.37px;font-size:18.7px;line-height:18.7px;color:#3a4a60;font-weight:bold;letter-spacing:-0.2px;text-indent:-0.2px;white-space:nowrap;">10</div>
<div class="a" style="left:922.0px;width:600px;text-align:center;top:873.37px;font-size:18.7px;line-height:18.7px;color:#3a4a60;font-weight:bold;letter-spacing:-0.2px;text-indent:-0.2px;white-space:nowrap;">...</div>
<div class="a" style="left:993.25px;width:600px;text-align:center;top:873.37px;font-size:18.7px;line-height:18.7px;color:#3a4a60;font-weight:bold;letter-spacing:-0.2px;text-indent:-0.2px;white-space:nowrap;">1729</div>
<div class="a" style="left:1074.85px;width:600px;text-align:center;top:873.37px;font-size:18.7px;line-height:18.7px;color:#3a4a60;font-weight:bold;letter-spacing:-0.2px;text-indent:-0.2px;white-space:nowrap;">1730</div>
<div class="a" style="left:1132.6px;width:600px;text-align:center;top:874.11px;font-size:17px;line-height:17px;color:#8b9db5;font-weight:normal;letter-spacing:0px;text-indent:0px;white-space:nowrap;">&raquo;</div>
<div class="a" style="right:58.09999999999991px;top:872.27px;font-size:20px;line-height:20px;color:#6d7e95;font-weight:normal;letter-spacing:-0.5px;white-space:nowrap;">Results 1 &ndash; 10 of 17294</div>
</body></html>
